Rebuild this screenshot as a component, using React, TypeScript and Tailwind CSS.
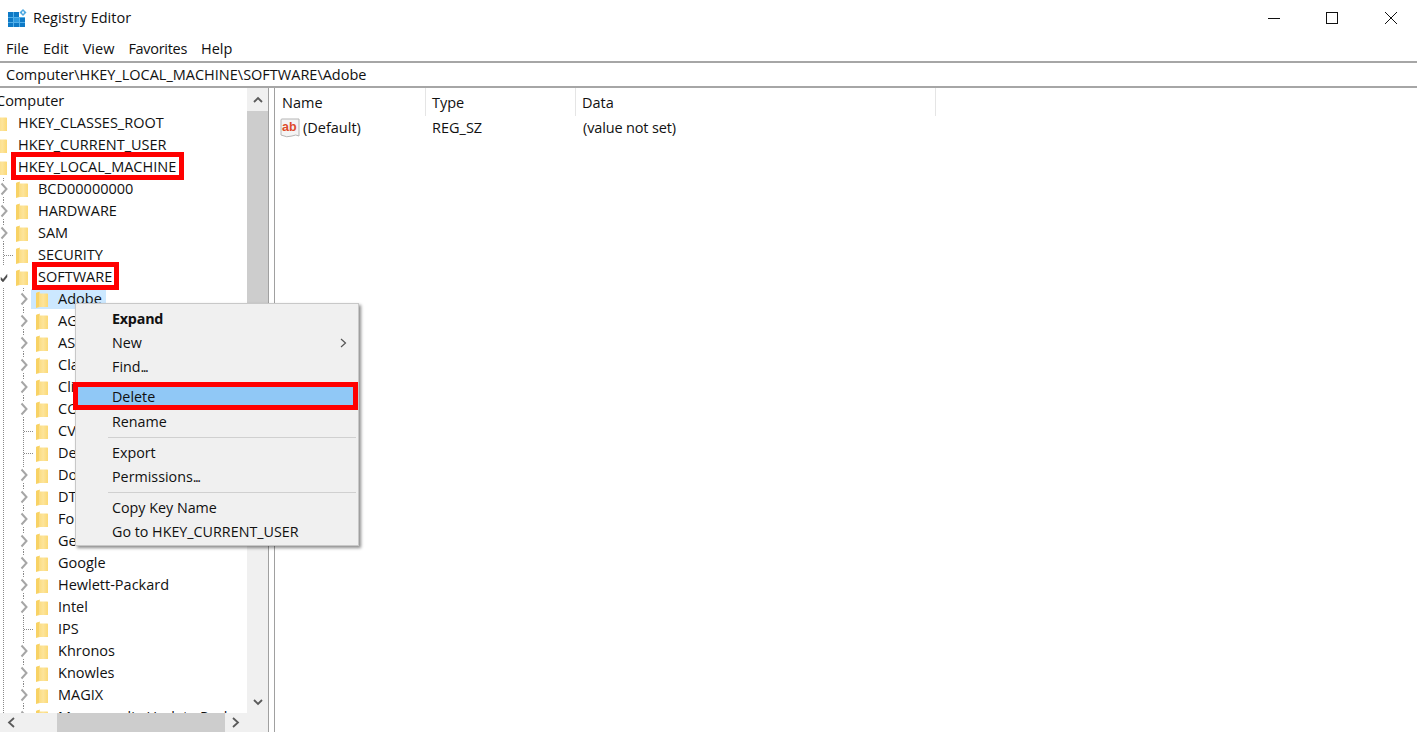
import React from "react";

const Folder = ({ className = "" }: { className?: string }) => (
  <svg width="12" height="17" viewBox="0 0 12 17" className={"shrink-0 " + className}>
    <defs>
      <linearGradient id="fg" x1="0" y1="0" x2="1" y2="0">
        <stop offset="0" stopColor="#f9d670" />
        <stop offset="0.6" stopColor="#fde49a" />
        <stop offset="1" stopColor="#fbd976" />
      </linearGradient>
    </defs>
    <path d="M0 2 L4 0.5 L4 2.5 L11.5 2.5 L12 3 L12 16 L4 16 L0 17 Z" fill="url(#fg)" />
    <path d="M0 2 L3 1 L3 15.5 L0 16.5 Z" fill="#f8d264" />
  </svg>
);

const Chevron = ({ x, color = "#a6a6a6" }: { x: number; color?: string }) => (
  <path d={`M${x - 2.5} 5.5 L${x + 2.5} 11 L${x - 2.5} 16.5`} fill="none" stroke={color} strokeWidth="2" />
);

type Kind = "chevron" | "leaf" | "open" | "last";

const Gutter = ({ level, kind }: { level: number; kind: Kind }) => {
  const width = level === 2 ? 16 : 36;
  const dots = "1 1";
  const line = "#8a8a8a";
  return (
    <svg width={width} height="22" className="shrink-0">
      {level === 3 && <path d="M3.5 0 V22" stroke={line} strokeDasharray={dots} fill="none" />}
      {level === 2 && kind === "leaf" && (
        <path d="M3.5 0 V22 M4 11.5 H14" stroke={line} strokeDasharray={dots} fill="none" />
      )}
      {level === 3 && kind === "leaf" && (
        <path d="M23.5 0 V22 M24 11.5 H34" stroke={line} strokeDasharray={dots} fill="none" />
      )}
      {level === 3 && kind === "chevron" && (
        <path d="M23.5 0 V3 M23.5 19 V22" stroke={line} strokeDasharray={dots} fill="none" />
      )}
      {level === 2 && kind === "chevron" && (
        <path d="M3.5 0 V3 M3.5 19 V22" stroke={line} strokeDasharray={dots} fill="none" />
      )}
      {kind === "chevron" && <Chevron x={level === 2 ? 4 : 24} />}
      {kind === "open" && (
        <path d="M1 11.5 L3 13.5 L7 8.5 V11 L3 16 L1 14 Z" fill="#4a4a4a" stroke="#4a4a4a" strokeWidth="0.5" />
      )}
    </svg>
  );
};

const Row = ({
  label,
  level,
  kind = "chevron",
  selected,
  box,
}: {
  label: string;
  level: number;
  kind?: Kind;
  selected?: boolean;
  box?: string;
}) => (
  <div className="flex h-[22px] items-center whitespace-nowrap">
    {level === 1 ? <Folder className="ml-[-5px]" /> : <Gutter level={level} kind={kind} />}
    {selected ? (
      <div className="ml-[-5px] flex h-[20px] items-center bg-[#cce8ff] pl-[5px] pr-[4px]">
        <Folder />
        <span className="ml-[10px]">{label}</span>
      </div>
    ) : (
      <>
        {level !== 1 && <Folder />}
        <span className={(level === 1 ? "ml-[11px] " : "ml-[10px] ") + (box ?? "")}>{label}</span>
      </>
    )}
  </div>
);

const boxLocal =
  "relative after:absolute after:top-[-4px] after:bottom-[-2px] after:left-[-7px] after:right-[-8px] after:border-[5px] after:border-[#f00] after:content-['']";
const boxSoftware =
  "relative after:absolute after:top-[-4px] after:bottom-[-2px] after:left-[-6px] after:right-[-7px] after:border-[5px] after:border-[#f00] after:content-['']";

const rows: { label: string; level: number; kind?: Kind; selected?: boolean; box?: string }[] = [
  { label: "HKEY_CLASSES_ROOT", level: 1 },
  { label: "HKEY_CURRENT_USER", level: 1 },
  { label: "HKEY_LOCAL_MACHINE", level: 1, box: boxLocal },
  { label: "BCD00000000", level: 2 },
  { label: "HARDWARE", level: 2 },
  { label: "SAM", level: 2 },
  { label: "SECURITY", level: 2, kind: "leaf" },
  { label: "SOFTWARE", level: 2, kind: "open", box: boxSoftware },
  { label: "Adobe", level: 3, selected: true },
  { label: "AG", level: 3 },
  { label: "AS", level: 3 },
  { label: "Cla", level: 3 },
  { label: "Cli", level: 3 },
  { label: "CO", level: 3 },
  { label: "CV", level: 3, kind: "leaf" },
  { label: "De", level: 3, kind: "leaf" },
  { label: "Do", level: 3 },
  { label: "DT", level: 3 },
  { label: "Fo", level: 3 },
  { label: "Ge", level: 3 },
  { label: "Google", level: 3 },
  { label: "Hewlett-Packard", level: 3 },
  { label: "Intel", level: 3 },
  { label: "IPS", level: 3, kind: "leaf" },
  { label: "Khronos", level: 3 },
  { label: "Knowles", level: 3 },
  { label: "MAGIX", level: 3 },
  { label: "Macromedia Update Pack", level: 3 },
];

const Item = ({
  label,
  bold,
  arrow,
  dots,
}: {
  label: string;
  bold?: boolean;
  arrow?: boolean;
  dots?: boolean;
}) => (
  <div
    className={
      "flex h-6 items-center justify-between pl-[36px] pr-[11px] " + (bold ? "font-bold tracking-[-0.2px]" : "")
    }
  >
    <span>
      {label}
      {dots && <span className="tracking-[-1.5px]">...</span>}
    </span>
    {arrow && (
      <svg width="7" height="10" viewBox="0 0 7 10">
        <path d="M1 1 L5.5 5 L1 9" fill="none" stroke="#555" strokeWidth="1.2" />
      </svg>
    )}
  </div>
);

const Sep = () => (
  <div className="flex h-[7px] items-center pl-[32px] pr-[2px]">
    <div className="h-px w-full bg-[#d0d0d0]" />
  </div>
);

const RegIcon = () => (
  <svg width="20" height="20" viewBox="0 0 20 20" className="shrink-0">
    <path d="M1 2 Q1 1 2 1 H19 V18 Q16 16 12 18 Q7 20 1 17 Z" fill="#f4f4f4" stroke="#b5b5b5" />
    <text
      x="2"
      y="12.5"
      fontSize="12.5"
      fontWeight="700"
      fill="#de4b2b"
      fontFamily="Liberation Sans, sans-serif"
    >
      ab
    </text>
  </svg>
);

const AppIcon = () => (
  <svg width="19" height="19" viewBox="0 0 19 19" className="shrink-0">
    <path d="M0 3 H11 V8 H17 V18 H0 Z" fill="#0f7ac6" />
    <path d="M0 8.5 H17 M0 13.5 H17 M5.5 3 V18 M11.5 8 V18" stroke="#54b1ea" />
    <rect x="6" y="9" width="5" height="4" fill="#2f9be0" />
    <path d="M15 0 L18.5 3.5 L15 7 L11.5 3.5 Z" fill="#4ea9e2" />
    <rect x="14" y="2.5" width="2" height="2" fill="#e6f4fc" />
  </svg>
);

export default function App() {
  return (
    <div
      className="relative flex h-[732px] w-full flex-col overflow-hidden bg-white text-[14.5px] text-[#111]"
      style={{ fontFamily: '"Open Sans", "Noto Sans", sans-serif' }}
    >
      {/* Title bar */}
      <div className="flex h-9 shrink-0 items-center pl-2">
        <AppIcon />
        <span className="ml-[6px]">Registry Editor</span>
        <div className="ml-auto flex items-center">
          <svg width="12" height="12" className="mr-[46px]">
            <path d="M0 6.5 H12" stroke="#111" />
          </svg>
          <svg width="12" height="12" className="mr-[47px]">
            <rect x="0.5" y="0.5" width="11" height="11" fill="none" stroke="#111" />
          </svg>
          <svg width="12" height="12" className="mr-[20px]">
            <path d="M0 0 L12 12 M12 0 L0 12" stroke="#111" />
          </svg>
        </div>
      </div>
      {/* Menu bar */}
      <div className="flex h-[25px] shrink-0 items-center gap-[14px] pl-[6px]">
        <span>File</span>
        <span>Edit</span>
        <span>View</span>
        <span className="tracking-[-0.3px]">Favorites</span>
        <span>Help</span>
      </div>
      {/* Address bar */}
      <div className="flex h-[27px] shrink-0 items-center border-y-2 border-y-[#a6a6a6] pl-[6px]">
        Computer\HKEY_LOCAL_MACHINE\SOFTWARE\Adobe
      </div>
      {/* Main */}
      <div className="flex min-h-0 flex-1">
        <div className="flex w-[268px] shrink-0 flex-col">
          <div className="flex min-h-0 flex-1">
            <div className="w-[247px] shrink-0 overflow-hidden pt-[2px]">
              <div className="ml-[-4px] flex h-[22px] items-center">Computer</div>
              {rows.map((r) => (
                <Row key={r.label} {...r} />
              ))}
            </div>
            <div className="flex w-[21px] shrink-0 flex-col bg-[#f0f0f0]">
              <div className="flex h-[23px] shrink-0 items-center justify-center">
                <svg width="10" height="7" viewBox="0 0 10 7">
                  <path d="M1 6 L5 2 L9 6" fill="none" stroke="#5a5a5a" strokeWidth="1.8" />
                </svg>
              </div>
              <div className="h-[210px] shrink-0 bg-[#cdcdcd]" />
              <div className="flex-1" />
              <div className="flex h-[22px] shrink-0 items-center justify-center">
                <svg width="10" height="7" viewBox="0 0 10 7">
                  <path d="M1 1 L5 5 L9 1" fill="none" stroke="#5a5a5a" strokeWidth="1.8" />
                </svg>
              </div>
            </div>
          </div>
          <div className="flex h-[19px] shrink-0 bg-[#f0f0f0]">
            <div className="flex w-[57px] items-center pl-[7px]">
              <svg width="8" height="11" viewBox="0 0 8 11">
                <path d="M7 1 L2 5.5 L7 10" fill="none" stroke="#5a5a5a" strokeWidth="1.8" />
              </svg>
            </div>
            <div className="w-[168px] bg-[#cdcdcd]" />
            <div className="flex flex-1 items-center pl-[7px]">
              <svg width="8" height="11" viewBox="0 0 8 11">
                <path d="M1 1 L6 5.5 L1 10" fill="none" stroke="#5a5a5a" strokeWidth="1.8" />
              </svg>
            </div>
          </div>
        </div>
        {/* Splitter */}
        <div className="w-[7px] shrink-0 border-x border-[#a0a0a0] bg-white" />
        {/* Values */}
        <div className="min-w-0 flex-1">
          <div className="mb-px flex h-[28px]">
            <div className="flex h-full w-[151px] items-center border-r border-[#e5e5e5] pl-[7px] pt-[2px]">Name</div>
            <div className="flex h-full w-[150px] items-center border-r border-[#e5e5e5] pl-[6px] pt-[2px]">Type</div>
            <div className="flex h-full w-[360px] items-center border-r border-[#e5e5e5] pl-[6px] pt-[2px]">Data</div>
          </div>
          <div className="flex h-[22px] items-center">
            <div className="flex w-[151px] items-center gap-[3px] pl-[5px]">
              <RegIcon />
              <span>(Default)</span>
            </div>
            <div className="w-[150px] pl-[6px]">REG_SZ</div>
            <div className="pl-[7px] tracking-[-0.15px]">(value not set)</div>
          </div>
        </div>
      </div>
      {/* Context menu */}
      <div className="absolute left-[75px] top-[303px] h-[243px] w-[284px] border border-[#c8c8c8] bg-[#f0f0f0] pt-[3px] text-[14.3px] shadow-[2px_2px_3px_rgba(0,0,0,0.45)]">
        <Item label="Expand" bold />
        <Item label="New" arrow />
        <Item label="Find" dots />
        <Sep />
        <div className="relative">
          <div className="absolute inset-x-[-3px] top-[-4px] bottom-0 mr-[3px] border-[5px] border-[#f00] bg-[#90c8f6]" />
          <div className="relative -translate-y-px">
            <Item label="Delete" />
          </div>
        </div>
        <Item label="Rename" />
        <Sep />
        <Item label="Export" />
        <Item label="Permissions" dots />
        <Sep />
        <Item label="Copy Key Name" />
        <Item label="Go to HKEY_CURRENT_USER" />
      </div>
    </div>
  );
}
